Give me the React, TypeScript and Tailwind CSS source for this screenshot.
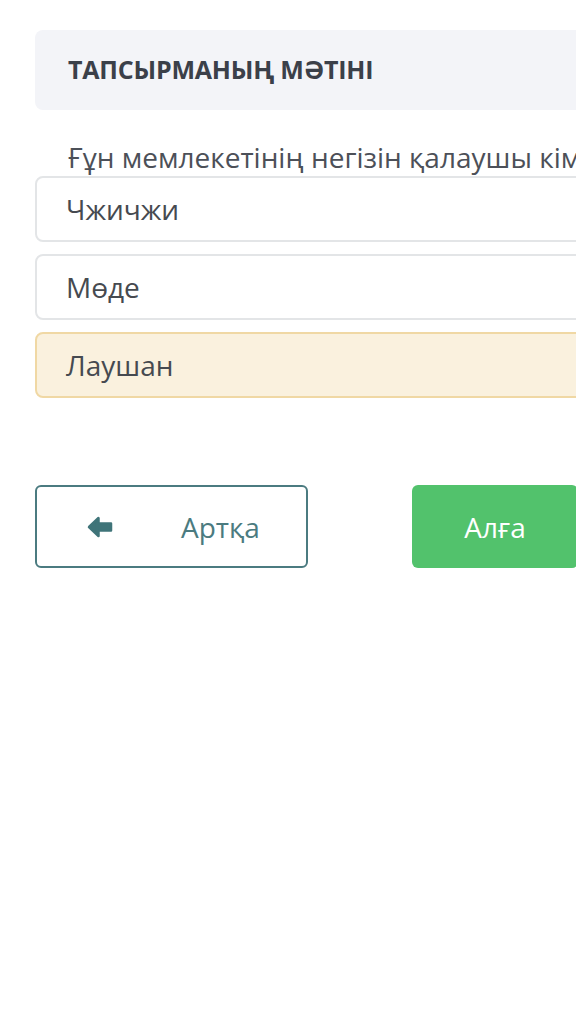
const options = [
  { text: "Чжичжи", selected: false },
  { text: "Мөде", selected: false },
  { text: "Лаушан", selected: true },
];

function ArrowLeft() {
  return (
    <svg width="26" height="22" viewBox="0 0 26 22" className="ml-[50px]">
      <g fill="#3f7479" stroke="#3f7479" strokeWidth="2.5" strokeLinejoin="round" strokeLinecap="round">
        <path d="M2 11 L11.5 2 L11.5 20 Z" />
        <path d="M10 7.5 L24 7.5 L24 14.5 L10 14.5 Z" />
      </g>
    </svg>
  );
}

export default function App() {
  return (
    <div className="w-[576px] h-[1010px] overflow-hidden bg-white font-['Open_Sans',sans-serif]">
      <div className="w-[660px] ml-[35px] pt-[30px]">
        {/* Заголовок */}
        <div className="h-[80px] rounded-[8px] bg-[#f3f4f8] flex items-center pl-[33px]">
          <h1 className="text-[25px] font-bold text-[#3b4049] tracking-[-0.2px]">
            ТАПСЫРМАНЫҢ МӘТІНІ
          </h1>
        </div>

        <p className="mt-[30px] pl-[33px] text-[28px] leading-[34px] text-[#4c5058] whitespace-nowrap">
          Ғұн мемлекетінің негізін қалаушы кім?
        </p>

        <div className="mt-[2px] flex flex-col gap-[12px]">
          {options.map((o, i) => (
            <div
              key={i}
              className={`h-[66px] rounded-[8px] border-2 flex items-center pl-[29px] text-[28px] text-[#464a50] ${
                o.selected ? "bg-[#faf1de] border-[#f0d8a4]" : "bg-white border-[#e3e5e7]"
              }`}
            >
              {o.text}
            </div>
          ))}
        </div>

        <div className="mt-[87px] flex items-center">
          <button className="w-[273px] h-[83px] rounded-[6px] border-2 border-[#4b7b80] flex items-center text-[#4b7b80] text-[28px]">
            <ArrowLeft />
            <span className="ml-[68px]">Артқа</span>
          </button>
          <button className="ml-[104px] w-[166px] h-[83px] rounded-[6px] bg-[#52c26c] text-white text-[28px] flex items-center justify-center">
            Алға
          </button>
        </div>
      </div>
    </div>
  );
}
